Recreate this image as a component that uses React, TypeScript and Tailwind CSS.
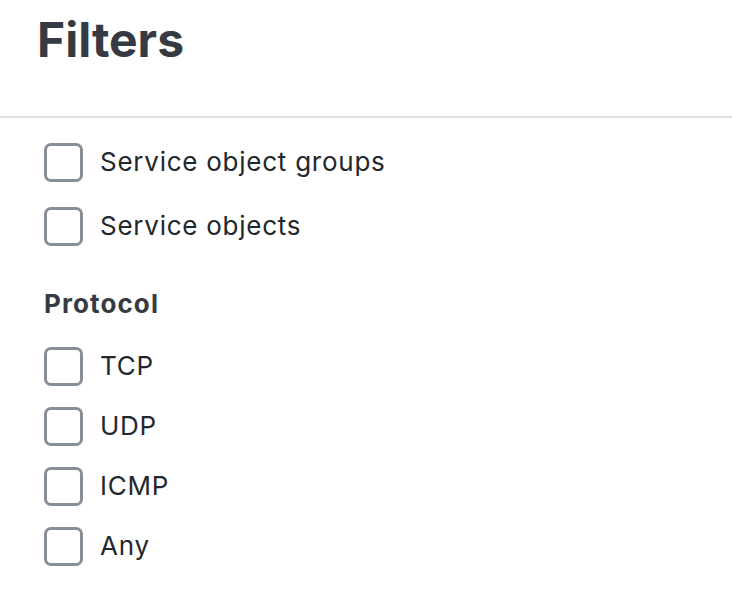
const serviceItems = ["Service object groups", "Service objects"];
const protocolItems = ["TCP", "UDP", "ICMP", "Any"];

const CheckRow = ({ label, h }: { label: string; h: string }) => (
  <label className={`flex items-center gap-[17px] ${h} cursor-pointer`}>
    <input type="checkbox" className="peer sr-only" />
    <span className="w-[39px] h-[39px] shrink-0 rounded-[7px] border-[3px] border-[#878e96] bg-white" />
    <span className="text-[26px] text-[#23282e] leading-none tracking-[0.75px]">{label}</span>
  </label>
);

export default function App() {
  return (
    <div className="w-[732px] h-[590px] bg-white overflow-hidden font-['Inter',sans-serif]">
      <div className="h-[116px] pl-[37px] pt-[14px]">
        <h1 className="text-[48px] font-bold text-[#363a42] leading-[52px]">
          Filters
        </h1>
      </div>
      <div className="h-[2px] bg-[#e1e1e5]" />
      <div className="pl-[44px] pt-[12px]">
        {serviceItems.map((s) => (
          <CheckRow key={s} label={s} h="h-[64px]" />
        ))}
        <div className="pt-[31px] pb-[17px] text-[26px] font-bold text-[#363a42] leading-[30px] tracking-[1.1px]">
          Protocol
        </div>
        {protocolItems.map((s) => (
          <CheckRow key={s} label={s} h="h-[60px]" />
        ))}
      </div>
    </div>
  );
}
